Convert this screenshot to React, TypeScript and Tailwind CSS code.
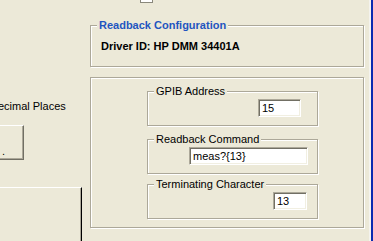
const FONT = { fontFamily: '"Liberation Sans", Arial, sans-serif' };

function GroupBox({
  label,
  className,
  labelClass,
  children,
}: {
  label: string;
  className: string;
  labelClass: string;
  children?: React.ReactNode;
}) {
  return (
    <div
      className={`relative border border-[#ACA899] shadow-[inset_1px_1px_0_#fff,1px_1px_0_#fff] ${className}`}
    >
      <span
        className={`absolute top-[-7px] bg-[#ECE9D8] px-[2px] leading-[13px] whitespace-nowrap ${labelClass}`}
      >
        {label}
      </span>
      {children}
    </div>
  );
}

function TextBox({ value, className }: { value: string; className: string }) {
  return (
    <div
      className={`h-[18px] border border-t-[#ACA899] border-l-[#ACA899] border-b-white border-r-white bg-white pl-[3px] text-[11px] leading-[16px] text-black shadow-[inset_1px_1px_0_#716F64,inset_-1px_-1px_0_#F1EFE2] ${className}`}
    >
      {value}
    </div>
  );
}

export default function App() {
  return (
    <div
      className="flex h-[241px] w-[373px] overflow-hidden bg-[#ECE9D8] text-[11px] text-black"
      style={FONT}
    >
      {/* left column, clipped by the window edge */}
      <div className="flex w-[90px] shrink-0 flex-col">
        <div className="mt-[100px] ml-[-10px] whitespace-nowrap leading-[13px]">Decimal Places</div>
        <div className="mt-[12px] ml-[-12px] flex h-[35px] w-[36px] items-end border border-t-white border-l-white border-b-[#716F64] border-r-[#716F64] pb-[3px] pl-[13px] shadow-[inset_-1px_-1px_0_#ACA899]">
          <span className="leading-[10px]">.</span>
        </div>
        <div className="mt-[27px] w-[82px] flex-1 border-t border-r border-t-white border-r-black shadow-[inset_-1px_0_0_#ACA899]" />
      </div>

      {/* main column */}
      <div className="flex w-[274px] shrink-0 flex-col">
        <div className="mt-[-10px] flex h-[13px] shrink-0 items-center">
          <div className="ml-[50px] h-[13px] w-[13px] shrink-0 border border-[#8A887C] bg-white" />
          <span className="ml-[4px] whitespace-nowrap leading-[13px]">Include Test Name on Schedule</span>
        </div>

        <GroupBox
          label="Readback Configuration"
          className="mt-[22px] h-[42px] shrink-0"
          labelClass="left-[6px] font-bold text-[#1F55C0]"
        >
          <div className="pt-[14px] pl-[10px] font-bold leading-[13px] whitespace-nowrap">
            Driver ID: HP DMM 34401A
          </div>
        </GroupBox>

        <GroupBox
          label=""
          className="mt-[10px] h-[151px] shrink-0 pl-[56px] pt-[13px]"
          labelClass="hidden"
        >
          <div className="flex w-[171px] flex-col">
            <GroupBox label="GPIB Address" className="h-[35px] pt-[7px]" labelClass="left-[6px]">
              <div className="flex justify-end pr-[16px]">
                <TextBox value="15" className="w-[43px]" />
              </div>
            </GroupBox>
            <GroupBox label="Readback Command" className="mt-[13px] h-[35px] pt-[7px]" labelClass="left-[6px]">
              <div className="flex justify-end pr-[9px]">
                <TextBox value="meas?{13}" className="w-[119px]" />
              </div>
            </GroupBox>
            <GroupBox label="Terminating Character" className="mt-[10px] h-[35px] pt-[7px]" labelClass="left-[6px]">
              <div className="flex justify-end pr-[10px]">
                <TextBox value="13" className="w-[34px]" />
              </div>
            </GroupBox>
          </div>
        </GroupBox>
      </div>

      <div className="w-[5px] shrink-0" />
      <div className="w-[2px] shrink-0 bg-[#F4F3EE]" />
      <div className="w-[2px] shrink-0 bg-[#0B2BB0]" />
    </div>
  );
}
